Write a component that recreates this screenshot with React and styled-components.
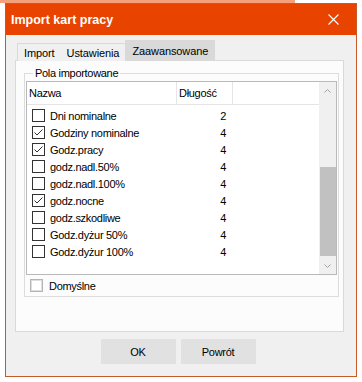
import React from 'react'
import styled, { createGlobalStyle } from 'styled-components'

const GlobalStyle = createGlobalStyle`
  body {
    margin: 0;
    background: #ffffff;
    font-family: "Liberation Sans", Arial, sans-serif;
  }
`

const fields = [
  { name: 'Dni nominalne', length: 2, checked: false },
  { name: 'Godziny nominalne', length: 4, checked: true },
  { name: 'Godz.pracy', length: 4, checked: true },
  { name: 'godz.nadl.50%', length: 4, checked: false },
  { name: 'godz.nadl.100%', length: 4, checked: false },
  { name: 'godz.nocne', length: 4, checked: true },
  { name: 'godz.szkodliwe', length: 4, checked: false },
  { name: 'Godz.dyżur 50%', length: 4, checked: false },
  { name: 'Godz.dyżur 100%', length: 4, checked: false }
]

const Screen = styled.div`
  width: 362px;
  height: 382px;
  overflow: hidden;
  background: #ffffff;
`

const ParentStrip = styled.div`
  width: 295px;
  height: 3px;
  background: #f4a07a;
`

const Dialog = styled.div`
  margin-left: 5px;
  width: 352px;
  height: 374px;
  box-sizing: border-box;
  border: 1px solid #c65a2b;
  background: #f0f0f0;
  display: flex;
  flex-direction: column;
`

const TitleBar = styled.div`
  height: 31px;
  flex-shrink: 0;
  background: #e84400;
  display: flex;
  align-items: center;
  justify-content: space-between;
  padding-left: 5px;
`

const Title = styled.span`
  color: #ffffff;
  font-weight: bold;
  font-size: 12.5px;
`

const CloseButton = styled.div`
  width: 46px;
  height: 31px;
  display: flex;
  align-items: center;
  justify-content: center;
`

const Body = styled.div`
  flex: 1;
  padding: 5px 12px 0 9px;
  display: flex;
  flex-direction: column;
  font-size: 11px;
  letter-spacing: -0.3px;
  color: #000;
`

const TabStrip = styled.div`
  height: 21px;
  display: flex;
  align-items: flex-end;
  padding-left: 2px;
  margin-bottom: -1px;
  position: relative;
  z-index: 1;
`

const Tab = styled.div`
  height: ${p => (p.$active ? '21px' : '18px')};
  box-sizing: border-box;
  padding: 0 6px;
  display: flex;
  align-items: center;
  letter-spacing: -0.1px;
  background: ${p => (p.$active ? '#d9d9d9' : '#f0f0f0')};
  border-top: 1px solid #d9d9d9;
  border-left: ${p => (p.$first || p.$active ? '1px solid #d9d9d9' : 'none')};
  border-right: ${p => (p.$active ? '1px solid #d9d9d9' : 'none')};
`

const Panel = styled.div`
  height: 272px;
  box-sizing: border-box;
  border: 1px solid #d9d9d9;
  background: #fcfcfc;
  padding: 5px 4px 0 8px;
`

const GroupBox = styled.fieldset`
  margin: 0;
  border: 1px solid #dcdcdc;
  padding: 1px 1px 3px 1px;
  min-width: 0;
`

const Legend = styled.legend`
  margin-left: 7px;
  padding: 0 2px;
  line-height: 14px;
`

const List = styled.div`
  height: 194px;
  box-sizing: border-box;
  border: 1px solid #b9b9b9;
  background: #ffffff;
  display: flex;
`

const Columns = styled.div`
  flex: 1;
  display: flex;
  flex-direction: column;
`

const Header = styled.div`
  height: 23px;
  box-sizing: border-box;
  display: flex;
  border-bottom: 1px solid #e5e5e5;
  background: #ffffff;
`

const HeaderCell = styled.div`
  width: ${p => p.$width || 'auto'};
  flex: ${p => (p.$width ? '0 0 auto' : '1')};
  box-sizing: border-box;
  padding-left: 2px;
  display: flex;
  align-items: center;
  border-right: ${p => (p.$width ? '1px solid #e5e5e5' : 'none')};
`

const Rows = styled.div`
  padding-top: 2px;
`

const Row = styled.div`
  height: 17px;
  display: flex;
  align-items: center;
`

const NameCell = styled.div`
  width: 150px;
  box-sizing: border-box;
  padding-left: 5px;
  display: flex;
  align-items: center;
  gap: 5px;
`

const LengthCell = styled.div`
  width: 56px;
  box-sizing: border-box;
  padding-right: 7px;
  text-align: right;
`

const Box = styled.div`
  width: 13px;
  height: 13px;
  box-sizing: border-box;
  border: 1px solid ${p => (p.$muted ? '#b4b4b4' : '#333333')};
  box-shadow: ${p => (p.$muted ? 'inset 0 0 0 1px #dedede' : 'none')};
  background: #ffffff;
  display: flex;
  align-items: center;
  justify-content: center;
  flex-shrink: 0;
`

const ScrollBar = styled.div`
  width: 17px;
  background: #f0f0f0;
  display: flex;
  flex-direction: column;
`

const ScrollArrow = styled.div`
  height: 17px;
  display: flex;
  align-items: center;
  justify-content: center;
`

const Track = styled.div`
  flex: 1;
  padding-top: 68px;
  padding-left: 1px;
`

const Thumb = styled.div`
  height: 89px;
  background: #c1c1c1;
`

const DefaultRow = styled.div`
  margin-top: 3px;
  height: 15px;
  padding-left: 4px;
  display: flex;
  align-items: center;
  gap: 6px;
`

const ButtonRow = styled.div`
  margin-top: 7px;
  padding-right: 3px;
  display: flex;
  justify-content: center;
  gap: 5px;
`

const Button = styled.div`
  width: 75px;
  height: 25px;
  background: #e1e1e1;
  display: flex;
  align-items: center;
  justify-content: center;
`

const Checkbox = ({ checked, muted }) => (
  <Box $muted={muted}>
    {checked && (
      <svg width='11' height='11' viewBox='0 0 11 11'>
        <path d='M1.5 5.5 L4 8 L9.5 2.5' fill='none' stroke='#333' strokeWidth='1' />
      </svg>
    )}
  </Box>
)

const Chevron = ({ up }) => (
  <svg width='7' height='4' viewBox='0 0 7 4'>
    <path d={up ? 'M0.5 3.5 L3.5 0.5 L6.5 3.5' : 'M0.5 0.5 L3.5 3.5 L6.5 0.5'} fill='none' stroke='#a3a3a3' strokeWidth='1' />
  </svg>
)

export default function App () {
  return (
    <Screen>
      <GlobalStyle />
      <ParentStrip />
      <Dialog>
        <TitleBar>
          <Title>Import kart pracy</Title>
          <CloseButton>
            <svg width='11' height='11' viewBox='0 0 11 11'>
              <path d='M0.5 0.5 L10.5 10.5 M10.5 0.5 L0.5 10.5' stroke='#fff' strokeWidth='1.1' />
            </svg>
          </CloseButton>
        </TitleBar>
        <Body>
          <TabStrip>
            <Tab $first>Import</Tab>
            <Tab>Ustawienia</Tab>
            <Tab $active>Zaawansowane</Tab>
          </TabStrip>
          <Panel>
            <GroupBox>
              <Legend>Pola importowane</Legend>
              <List>
                <Columns>
                  <Header>
                    <HeaderCell $width='150px'>Nazwa</HeaderCell>
                    <HeaderCell $width='56px'>Długość</HeaderCell>
                    <HeaderCell />
                  </Header>
                  <Rows>
                    {fields.map((f, i) => (
                      <Row key={i}>
                        <NameCell>
                          <Checkbox checked={f.checked} />
                          <span>{f.name}</span>
                        </NameCell>
                        <LengthCell>{f.length}</LengthCell>
                      </Row>
                    ))}
                  </Rows>
                </Columns>
                <ScrollBar>
                  <ScrollArrow><Chevron up /></ScrollArrow>
                  <Track><Thumb /></Track>
                  <ScrollArrow><Chevron /></ScrollArrow>
                </ScrollBar>
              </List>
              <DefaultRow>
                <Checkbox muted />
                <span>Domyślne</span>
              </DefaultRow>
            </GroupBox>
          </Panel>
          <ButtonRow>
            <Button>OK</Button>
            <Button>Powrót</Button>
          </ButtonRow>
        </Body>
      </Dialog>
    </Screen>
  )
}
